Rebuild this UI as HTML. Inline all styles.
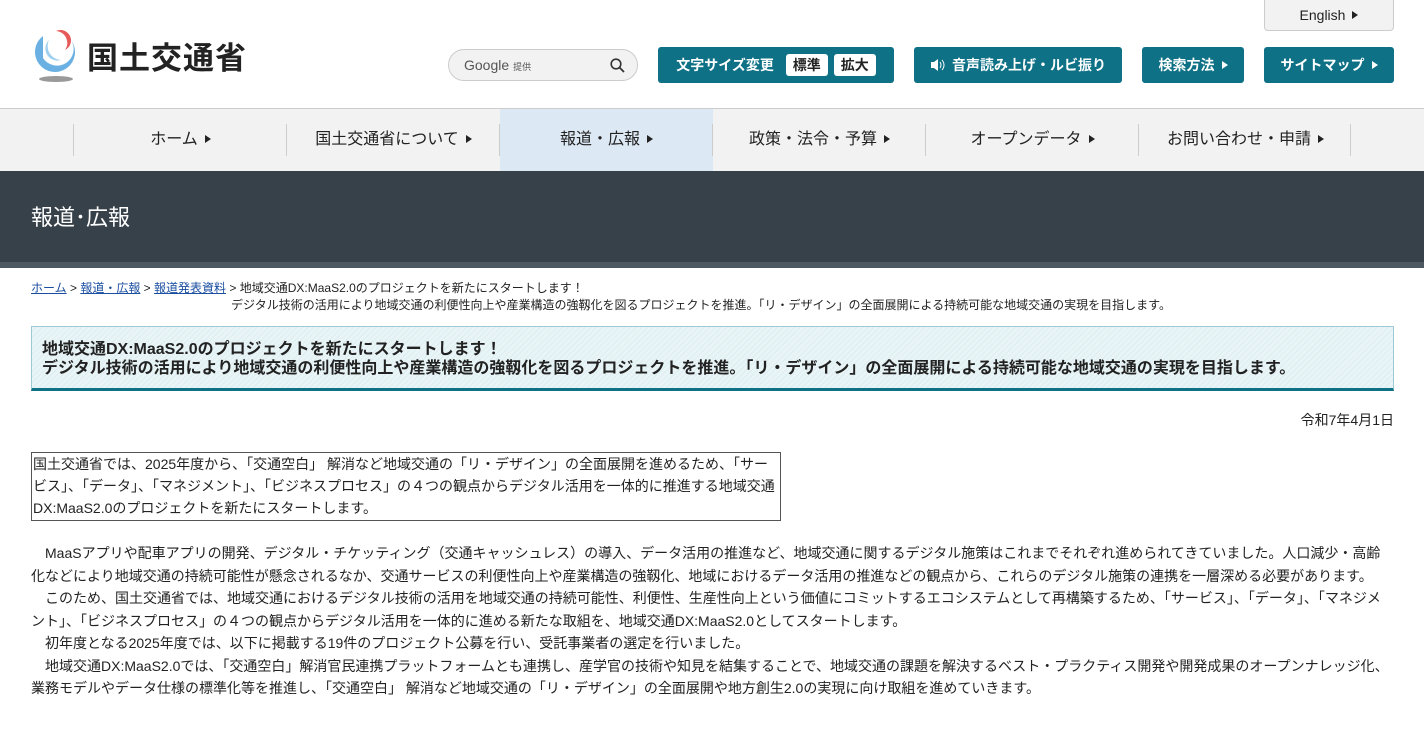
<!DOCTYPE html>
<html><head><meta charset="utf-8"><style>
*{margin:0;padding:0;box-sizing:border-box}
body{width:1424px;height:738px;overflow:hidden;background:#fff;font-family:"Liberation Sans","Noto Sans CJK JP",sans-serif;color:#222}
.hdr{position:relative;height:109px;border-bottom:1px solid #ccc}
.eng{position:absolute;left:1264px;top:0;width:130px;height:31px;background:#f2f2f2;border:1px solid #ccc;border-top:none;border-radius:0 0 4px 4px;font-size:14px;text-align:center;line-height:31px}
.tri{display:inline-block;width:0;height:0;border-left:6px solid currentColor;border-top:4px solid transparent;border-bottom:4px solid transparent;margin-left:7px;vertical-align:1px}
.logo{position:absolute;left:31px;top:30px}
.logotxt{position:absolute;left:87px;top:33px;font-size:31px;font-weight:bold;letter-spacing:1px;color:#222}
.srch{position:absolute;left:448px;top:49px;width:190px;height:32px;border:1px solid #ccc;border-radius:16px;background:#f2f2f2;font-size:14px;color:#555;padding-left:15px;line-height:30px}
.srch small{font-size:9px;margin-left:4px}
.btn{position:absolute;top:47px;height:36px;background:#0e7186;color:#fff;font-weight:bold;font-size:14px;border-radius:3px;line-height:36px;text-align:center}
.w{display:inline-block;background:#fff;color:#222;border-radius:3px;padding:0 7px;line-height:22px;margin-left:8px;font-size:14px}
.nav{height:62px;background:#f2f2f2;position:relative}
.nav div{position:absolute;top:0;height:62px;line-height:62px;text-align:center;font-size:16px;width:213px}
.nav .sep{position:absolute;top:15px;width:1px;height:32px;background:#ccc}
.ban{height:97px;background:#374149;color:#fff;font-size:22px;padding-left:31px;line-height:94px;border-bottom:6px solid #4d5861}
.bc{position:absolute;left:31px;top:280px;font-size:12px;line-height:17px}
.bc a{color:#1a4ea0;text-decoration:underline}
.tbox{position:absolute;left:31px;top:326px;width:1363px;height:65px;border:1px solid #9cc9d3;border-bottom:3px solid #0e7186;background:repeating-linear-gradient(135deg,#e9f4f6 0 3px,#dceef2 3px 4px);padding:13px 10px;font-size:16px;font-weight:bold;line-height:19px}
.date{position:absolute;right:30px;top:410px;font-size:14px}
.frame{position:absolute;left:31px;top:452px;width:750px;height:69px;border:1px solid #555;font-size:14px;line-height:22px;padding:0 1px}
.body{position:absolute;left:31px;top:542px;width:1358px;font-size:14px;line-height:22.5px}
</style></head><body>
<div class="hdr">
<div class="eng">English<span class="tri"></span></div>
<svg class="logo" width="50" height="54" viewBox="0 0 50 54"><ellipse cx="25" cy="49" rx="17" ry="3" fill="#999"/><path d="M12 6 A20 20 0 1 0 40 10 A16 16 0 0 1 12 28 Z" fill="#6ab0e2"/><path d="M18 10 A12 12 0 0 0 30 30 A14 14 0 0 1 18 10Z" fill="#9fd0ef"/><path d="M25 1 A12 12 0 0 1 34 20 A9 9 0 0 0 25 1Z" fill="#e85a5a"/></svg>
<div class="logotxt">国土交通省</div>
<div class="srch">Google<small>提供</small><svg style="position:absolute;right:12px;top:8px" width="15" height="15" viewBox="0 0 15 15"><circle cx="6" cy="6" r="4.8" fill="none" stroke="#333" stroke-width="1.6"/><path d="M9.5 9.5 L14 14" stroke="#333" stroke-width="1.8"/></svg></div>
<div class="btn" style="left:658px;width:236px">文字サイズ変更 <span class="w">標準</span><span class="w" style="margin-left:6px">拡大</span></div>
<div class="btn" style="left:914px;width:208px"><svg width="16" height="14" viewBox="0 0 16 14" style="vertical-align:-2px;margin-right:6px"><path d="M1 4h3l4-3v12l-4-3H1z" fill="#fff"/><path d="M10 4q2 3 0 6M12 2q4 5 0 10" stroke="#fff" fill="none"/></svg>音声読み上げ・ルビ振り</div>
<div class="btn" style="left:1142px;width:102px">検索方法<span class="tri"></span></div>
<div class="btn" style="left:1264px;width:130px">サイトマップ<span class="tri"></span></div>
</div>
<div class="nav">
<span class="sep" style="left:73px"></span>
<div style="left:74px">ホーム<span class="tri"></span></div><span class="sep" style="left:286px"></span>
<div style="left:287px">国土交通省について<span class="tri"></span></div><span class="sep" style="left:499px"></span>
<div style="left:500px;background:#dce8f3">報道・広報<span class="tri"></span></div><span class="sep" style="left:712px"></span>
<div style="left:713px">政策・法令・予算<span class="tri"></span></div><span class="sep" style="left:925px"></span>
<div style="left:926px">オープンデータ<span class="tri"></span></div><span class="sep" style="left:1138px"></span>
<div style="left:1139px">お問い合わせ・申請<span class="tri"></span></div><span class="sep" style="left:1350px"></span>
</div>
<div class="ban">報道･広報</div>
<div class="bc"><a>ホーム</a> &gt; <a>報道・広報</a> &gt; <a>報道発表資料</a> &gt; 地域交通DX:MaaS2.0のプロジェクトを新たにスタートします！<br><span style="padding-left:200px">デジタル技術の活用により地域交通の利便性向上や産業構造の強靱化を図るプロジェクトを推進。「リ・デザイン」の全面展開による持続可能な地域交通の実現を目指します。</span></div>
<div class="tbox">地域交通DX:MaaS2.0のプロジェクトを新たにスタートします！<br>デジタル技術の活用により地域交通の利便性向上や産業構造の強靱化を図るプロジェクトを推進。「リ・デザイン」の全面展開による持続可能な地域交通の実現を目指します。</div>
<div class="date">令和7年4月1日</div>
<div class="frame">国土交通省では、2025年度から、「交通空白」 解消など地域交通の「リ・デザイン」の全面展開を進めるため、「サービス」、「データ」、「マネジメント」、「ビジネスプロセス」の４つの観点からデジタル活用を一体的に推進する地域交通DX:MaaS2.0のプロジェクトを新たにスタートします。</div>
<div class="body">　MaaSアプリや配車アプリの開発、デジタル・チケッティング（交通キャッシュレス）の導入、データ活用の推進など、地域交通に関するデジタル施策はこれまでそれぞれ進められてきていました。人口減少・高齢化などにより地域交通の持続可能性が懸念されるなか、交通サービスの利便性向上や産業構造の強靱化、地域におけるデータ活用の推進などの観点から、これらのデジタル施策の連携を一層深める必要があります。<br>　このため、国土交通省では、地域交通におけるデジタル技術の活用を地域交通の持続可能性、利便性、生産性向上という価値にコミットするエコシステムとして再構築するため、「サービス」、「データ」、「マネジメント」、「ビジネスプロセス」の４つの観点からデジタル活用を一体的に進める新たな取組を、地域交通DX:MaaS2.0としてスタートします。<br>　初年度となる2025年度では、以下に掲載する19件のプロジェクト公募を行い、受託事業者の選定を行いました。<br>　地域交通DX:MaaS2.0では、「交通空白」解消官民連携プラットフォームとも連携し、産学官の技術や知見を結集することで、地域交通の課題を解決するベスト・プラクティス開発や開発成果のオープンナレッジ化、業務モデルやデータ仕様の標準化等を推進し、「交通空白」 解消など地域交通の「リ・デザイン」の全面展開や地方創生2.0の実現に向け取組を進めていきます。</div>
</body></html>
